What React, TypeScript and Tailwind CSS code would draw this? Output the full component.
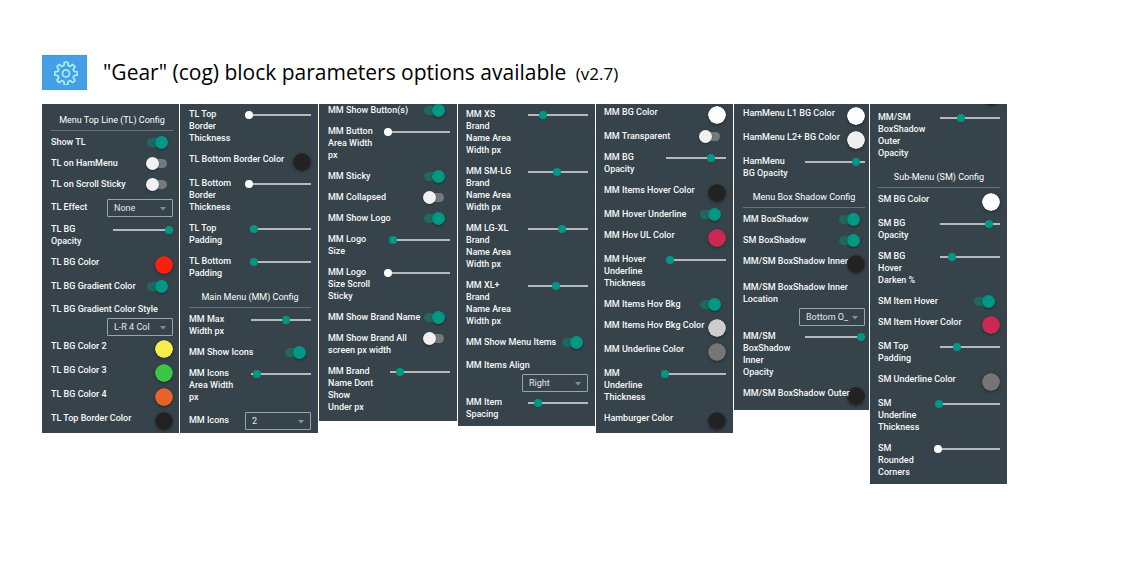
import { useState } from "react";

type Row =
  | { kind: "heading"; label: string }
  | { kind: "toggle"; label: string; on: boolean }
  | { kind: "color"; label: string; value: string }
  | { kind: "slider"; label: string; value: number }
  | { kind: "select"; label: string; value: string; stacked?: boolean };

const heading = (label: string): Row => ({ kind: "heading", label });
const toggle = (label: string, on: boolean): Row => ({ kind: "toggle", label, on });
const color = (label: string, value: string): Row => ({ kind: "color", label, value });
const slider = (label: string, value: number): Row => ({ kind: "slider", label, value });
const select = (label: string, value: string, stacked = false): Row => ({ kind: "select", label, value, stacked });

const panels: { id: string; className: string; rows: Row[]; scrolledDot?: boolean }[] = [
  {
    id: "tl",
    className: "pt-[7px] pb-[3px] pl-[9px] pr-[6px]",
    rows: [
      heading("Menu Top Line (TL) Config"),
      toggle("Show TL", true),
      toggle("TL on HamMenu", false),
      toggle("TL on Scroll Sticky", false),
      select("TL Effect", "None"),
      slider("TL BG\nOpacity", 100),
      color("TL BG Color", "#f9200f"),
      toggle("TL BG Gradient Color", true),
      select("TL BG Gradient Color Style", "L-R 4 Col", true),
      color("TL BG Color 2", "#f7ec4b"),
      color("TL BG Color 3", "#3ac545"),
      color("TL BG Color 4", "#e8622a"),
      color("TL Top Border Color", "#222222"),
    ],
  },
  {
    id: "mm-icons",
    className: "pt-1 pb-[3px] pl-[9px] pr-[7px]",
    rows: [
      slider("TL Top\nBorder\nThickness", 0),
      color("TL Bottom Border Color", "#222222"),
      slider("TL Bottom\nBorder\nThickness", 0),
      slider("TL Top\nPadding", 8),
      slider("TL Bottom\nPadding", 8),
      heading("Main Menu (MM) Config"),
      slider("MM Max\nWidth px", 64),
      toggle("MM Show Icons", true),
      slider("MM Icons\nArea Width\npx", 13),
      select("MM Icons", "2"),
    ],
  },
  {
    id: "mm-brand",
    className: "pb-[7px] pl-[9px] pr-[7px]",
    rows: [
      toggle("MM Show Button(s)", true),
      slider("MM Button\nArea Width\npx", 0),
      toggle("MM Sticky", true),
      toggle("MM Collapsed", false),
      toggle("MM Show Logo", true),
      slider("MM Logo\nSize", 9),
      slider("MM Logo\nSize Scroll\nSticky", 0),
      toggle("MM Show Brand Name", true),
      toggle("MM Show Brand All\nscreen px width", false),
      slider("MM Brand\nName Dont\nShow\nUnder px", 21),
    ],
  },
  {
    id: "mm-areas",
    className: "pt-1 pb-[5px] pl-2 pr-[7px]",
    rows: [
      slider("MM XS\nBrand\nName Area\nWidth px", 30),
      slider("MM SM-LG\nBrand\nName Area\nWidth px", 54),
      slider("MM LG-XL\nBrand\nName Area\nWidth px", 62),
      slider("MM XL+\nBrand\nName Area\nWidth px", 52),
      toggle("MM Show Menu Items", true),
      select("MM Items Align", "Right", true),
      slider("MM Item\nSpacing", 20),
    ],
  },
  {
    id: "mm-colors",
    className: "pt-[2px] pb-[3px] pl-2 pr-[7px]",
    rows: [
      color("MM BG Color", "#ffffff"),
      toggle("MM Transparent", false),
      slider("MM BG\nOpacity", 81),
      color("MM Items Hover Color", "#222222"),
      toggle("MM Hover Underline", true),
      color("MM Hov UL Color", "#cb2952"),
      slider("MM Hover\nUnderline\nThickness", 10),
      toggle("MM Items Hov Bkg", true),
      color("MM Items Hov Bkg Color", "#cdcdcd"),
      color("MM Underline Color", "#757575"),
      slider("MM\nUnderline\nThickness", 2),
      color("Hamburger Color", "#222222"),
    ],
  },
  {
    id: "shadow",
    className: "pt-[3px] pb-[5px] pl-[9px] pr-1",
    rows: [
      color("HamMenu L1 BG Color", "#ffffff"),
      color("HamMenu L2+ BG Color", "#f0efef"),
      slider("HamMenu\nBG Opacity", 91),
      heading("Menu Box Shadow Config"),
      toggle("MM BoxShadow", true),
      toggle("SM BoxShadow", true),
      color("MM/SM BoxShadow Inner", "#222222"),
      select("MM/SM BoxShadow Inner\nLocation", "Bottom O_", true),
      slider("MM/SM\nBoxShadow\nInner\nOpacity", 100),
      color("MM/SM BoxShadow Outer", "#222222"),
    ],
  },
  {
    id: "sm",
    className: "pt-[7px] pb-[5px] pl-2 pr-[7px]",
    scrolledDot: true,
    rows: [
      slider("MM/SM\nBoxShadow\nOuter\nOpacity", 40),
      heading("Sub-Menu (SM) Config"),
      color("SM BG Color", "#ffffff"),
      slider("SM BG\nOpacity", 88),
      slider("SM BG\nHover\nDarken %", 24),
      toggle("SM Item Hover", true),
      color("SM Item Hover Color", "#cb2952"),
      slider("SM Top\nPadding", 32),
      color("SM Underline Color", "#757575"),
      slider("SM\nUnderline\nThickness", 2),
      slider("SM\nRounded\nCorners", 0),
    ],
  },
];

const labelClass = "relative z-10 whitespace-pre font-medium text-[#f6f8f8]";

function Toggle({ id, initial }: { id: string; initial: boolean }) {
  const [on, setOn] = useState(initial);
  return (
    <input
      id={id}
      type="checkbox"
      role="switch"
      checked={on}
      onChange={() => setOn(!on)}
      className="relative mt-[2px] mr-[6px] h-[9px] w-[20px] shrink-0 cursor-pointer appearance-none rounded-full bg-[#76797b] before:absolute before:-top-[2px] before:-left-[1px] before:size-[13px] before:rounded-full before:bg-[#f1f1f1] before:shadow-[0_1px_2px_rgba(0,0,0,0.4)] checked:bg-[#1f675f] checked:before:left-[8px] checked:before:bg-[#009784]"
    />
  );
}

function Slider({ id, initial }: { id: string; initial: number }) {
  const [value, setValue] = useState(initial);
  const thumb = value === 0 ? "[&::-webkit-slider-thumb]:bg-white" : "[&::-webkit-slider-thumb]:bg-[#009784]";
  return (
    <input
      id={id}
      type="range"
      min={0}
      max={100}
      value={value}
      onChange={(e) => setValue(Number(e.target.value))}
      className={`h-[13px] w-[66px] shrink-0 cursor-pointer appearance-none bg-[linear-gradient(#b4babd,#b4babd)] bg-[length:60px_2px] bg-right bg-no-repeat [&::-webkit-slider-thumb]:size-2 [&::-webkit-slider-thumb]:appearance-none [&::-webkit-slider-thumb]:rounded-full ${thumb}`}
    />
  );
}

function ColorDot({ id, initial }: { id: string; initial: string }) {
  const [value, setValue] = useState(initial);
  return (
    <input
      id={id}
      type="color"
      value={value}
      onChange={(e) => setValue(e.target.value)}
      className="-ml-4 size-[18px] shrink-0 cursor-pointer appearance-none rounded-full border-0 bg-transparent p-0 shadow-[0_1px_3px_rgba(0,0,0,0.4)] [&::-webkit-color-swatch]:rounded-full [&::-webkit-color-swatch]:border-0 [&::-webkit-color-swatch-wrapper]:p-0"
    />
  );
}

function Dropdown({ id, value }: { id: string; value: string }) {
  return (
    <span className="relative shrink-0">
      <select
        id={id}
        defaultValue={value}
        className="block h-[18px] w-[66px] cursor-pointer appearance-none rounded-[1px] border border-[#9ba4a8] bg-transparent pl-[6px] text-[9px] leading-[16px] text-[#e4e7e8]"
      >
        <option>{value}</option>
      </select>
      <svg viewBox="0 0 6 4" className="pointer-events-none absolute top-[8px] right-[7px] h-[4px] w-[6px] fill-[#849096]">
        <path d="M0 0h6L3 3.5z" />
      </svg>
    </span>
  );
}

function SettingRow({ row, id }: { row: Row; id: string }) {
  switch (row.kind) {
    case "heading":
      return (
        <h2 className="mb-[5px] border-b border-[#66737a] pt-[3px] pb-1 text-center text-white">{row.label}</h2>
      );
    case "select":
      return row.stacked ? (
        <div className="mb-1 flex flex-col items-end gap-[3px] pt-[2px]">
          <label htmlFor={id} className={`${labelClass} self-start`}>{row.label}</label>
          <Dropdown id={id} value={row.value} />
        </div>
      ) : (
        <div className="mb-[6px] flex items-start justify-between last:mb-0">
          <label htmlFor={id} className={`${labelClass} pt-[2px]`}>{row.label}</label>
          <Dropdown id={id} value={row.value} />
        </div>
      );
    case "color":
      return (
        <div className="mb-[6px] flex items-start justify-between last:mb-0">
          <label htmlFor={id} className={labelClass}>{row.label}</label>
          <ColorDot id={id} initial={row.value} />
        </div>
      );
    case "toggle":
      return (
        <div className="mb-[9px] flex items-start justify-between last:mb-0">
          <label htmlFor={id} className={labelClass}>{row.label}</label>
          <Toggle id={id} initial={row.on} />
        </div>
      );
    case "slider":
      return (
        <div className="mb-2 flex items-start justify-between last:mb-0">
          <label htmlFor={id} className={`${labelClass} pb-px`}>{row.label}</label>
          <Slider id={id} initial={row.value} />
        </div>
      );
  }
}

function GearIcon() {
  return (
    <svg viewBox="0 0 24 24" className="ml-[3px] size-6 fill-none stroke-[#a5eef5] stroke-[1.8]" strokeLinejoin="round" aria-hidden="true">
      <path d="M10.2 1.5q1.8-.8 3.6 0l.3 3 2.2.9 2.3-1.9q1.8.7 2.4 2.4l-1.8 2.4.9 2.1 3 .4q.7 1.7 0 3.4l-3 .4-.9 2.1 1.8 2.4q-.7 1.8-2.4 2.4l-2.3-1.9-2.2.9-.3 3q-1.8.8-3.6 0l-.3-3-2.2-.9-2.3 1.9q-1.8-.7-2.4-2.4l1.8-2.4-.9-2.1-3-.4q-.7-1.7 0-3.4l3-.4.9-2.1L3 5.9q.7-1.8 2.4-2.4l2.3 1.9 2.2-.9z" />
      <circle cx="12" cy="12.4" r="3.5" />
    </svg>
  );
}

export default function App() {
  return (
    <main className="min-h-screen bg-white pt-[55px] pr-[125px] pb-10 pl-[42px] font-['Roboto',sans-serif]">
      <header className="mb-[14px] flex items-center gap-4">
        <span className="flex h-[35px] w-[45px] items-center justify-center border border-[#5a94c4] bg-[#449fe6] shadow-[0_0_3px_#d5f4fb]">
          <GearIcon />
        </span>
        <h1 className="font-['Open_Sans',sans-serif] text-[21px] leading-[28px] whitespace-nowrap text-black">
          "Gear" (cog) block parameters options available <span className="ml-1 text-[17px]">(v2.7)</span>
        </h1>
      </header>
      <div className="grid grid-cols-[137fr_138fr_138fr_137fr_137fr_135fr_137fr] items-start gap-px">
        {panels.map((panel) => (
          <section
            key={panel.id}
            className={`relative min-w-0 overflow-hidden bg-[#36434b] text-[9px] leading-[12px] ${panel.className}`}
          >
            {panel.scrolledDot && (
              <span className="absolute -top-[17px] right-[7px] size-[18px] rounded-full bg-[#222222] shadow-[0_1px_3px_rgba(0,0,0,0.4)]" />
            )}
            {panel.rows.map((row, i) => (
              <SettingRow key={i} row={row} id={`${panel.id}-${i}`} />
            ))}
          </section>
        ))}
      </div>
    </main>
  );
}
